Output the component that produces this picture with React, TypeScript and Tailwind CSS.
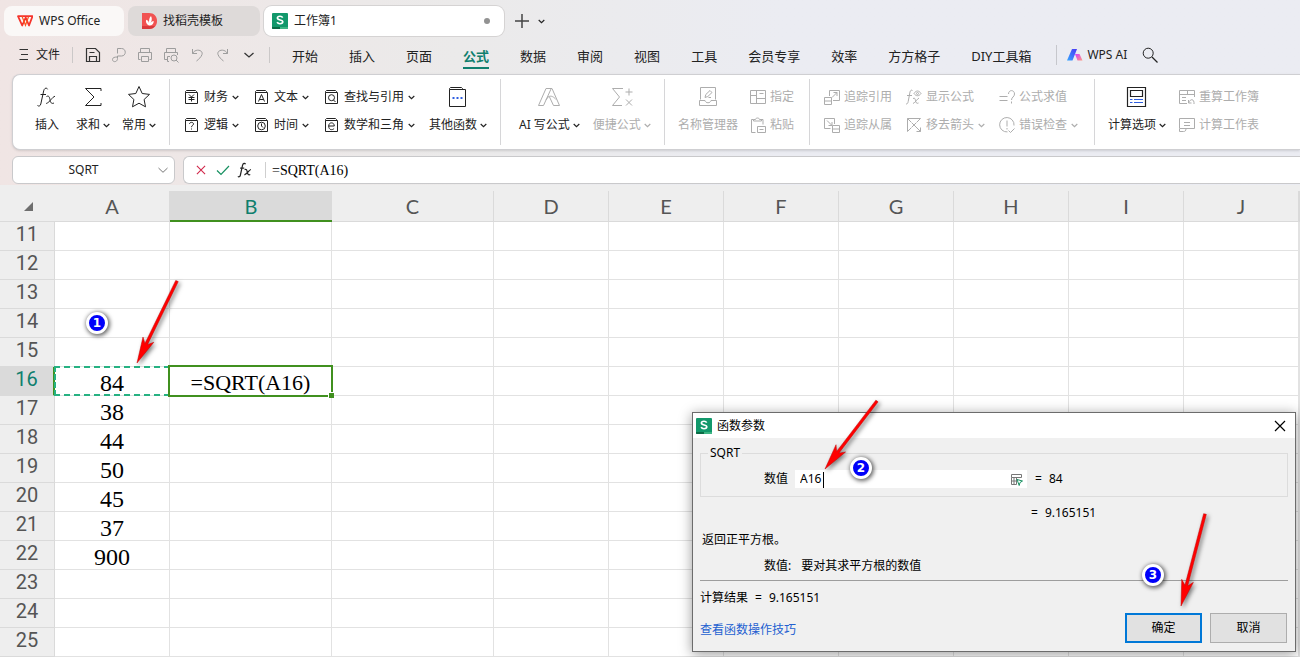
import React from "react";

type Kids = { children?: React.ReactNode };

function Icon({ size = 16, box = 16, className = "", children }: Kids & { size?: number; box?: number; className?: string }) {
  return (
    <svg width={size} height={size} viewBox={`0 0 ${box} ${box}`} fill="none" stroke="currentColor" className={`shrink-0 ${className}`} aria-hidden="true">
      {children}
    </svg>
  );
}

function Chevron() {
  return (
    <svg width="7" height="5" viewBox="0 0 7 5" fill="none" stroke="currentColor" strokeWidth="1.2" className="shrink-0" aria-hidden="true">
      <path d="M.7 1l2.8 2.6L6.3 1" />
    </svg>
  );
}

function SheetLogo() {
  return (
    <svg width="16" height="16" viewBox="0 0 16 16" className="shrink-0" aria-hidden="true">
      <rect width="16" height="16" rx="1" fill="#12986b" />
      <path d="M1 14h7v2H1a1 1 0 0 1-1-1v-1z" fill="#0a6b45" />
      <path d="M8 14h8v1a1 1 0 0 1-1 1H8z" fill="#3db583" />
      <path d="M10.7 4.6C10.2 3.7 9.2 3.3 8 3.3c-1.500 0-2.600.7-2.600 1.800 0 2.600 5.400 1.200 5.400 3.700 0 1.200-1.200 1.900-2.800 1.900-1.400 0-2.400-.5-2.900-1.500" fill="none" stroke="#fff" strokeWidth="1.600" />
    </svg>
  );
}

const fxPaths = (
  <>
    <path d="M12.600 4.300c-.6-1.700-3.200-1.700-3.900 1.500L5.800 19c-.5 2.200-2.200 2.500-3.300 1.500" />
    <path d="M5.500 9.500H11" />
    <path d="M11.500 11.500c2.200-1.200 3 .4 3.500 3.200.5 2.900 1.500 4.500 4 3.300M20 11.300c-2.500.2-5 6-8.800 7.200" />
  </>
);

const book = <path d="M1.500 3.500h12v11h-12zM1.500 3.500v-1l1-1h9l1 1v1" />;

function BookIcon({ children }: Kids) {
  return (
    <Icon>
      {book}
      {children}
    </Icon>
  );
}

function Small({ icon, label, menu, off }: { icon: React.ReactNode; label: string; menu?: boolean; off?: boolean }) {
  return (
    <button type="button" disabled={off} className={`flex h-5 items-center gap-1 whitespace-nowrap ${off ? "text-[#adadad]" : "text-[#222]"}`}>
      {icon}
      <span>{label}</span>
      {menu && <Chevron />}
    </button>
  );
}

function Big({ icon, label, menu, off }: { icon: React.ReactNode; label: string; menu?: boolean; off?: boolean }) {
  return (
    <button type="button" disabled={off} className={`flex flex-col items-center gap-1.5 whitespace-nowrap ${off ? "text-[#adadad]" : "text-[#222]"}`}>
      <span className="flex h-6 items-center">{icon}</span>
      <span className="flex h-5 items-center gap-[3px]">
        {label}
        {menu && <Chevron />}
      </span>
    </button>
  );
}

function Stack({ children }: Kids) {
  return <div className="flex flex-col gap-2 pt-0.5">{children}</div>;
}

function Rule() {
  return <div className="-mt-1.5 h-[66px] w-px shrink-0 bg-[#d6d6d8]" />;
}

function Ribbon() {
  return (
    <section className="ml-3 flex h-[76px] items-start overflow-hidden rounded-l-lg border border-r-0 border-[#cfcfd2] bg-white pt-2.5 text-[12px] leading-5 shadow-sm">
      <div className="flex w-[156px] shrink-0 gap-[18px] pl-[22px]">
        <Big label="插入" icon={<Icon size={24} box={24}>{fxPaths}</Icon>} />
        <div className="-ml-px flex gap-3">
          <Big label="求和" menu icon={<Icon size={24} box={24}><path d="M20 6V3.500H4.500L13 12l-8.500 8.500H20V18" /></Icon>} />
          <Big label="常用" menu icon={<Icon size={24} box={24}><path d="M12 1.500l3.200 7 7.300.9-5.400 5.100 1.400 7.300L12 18.200l-6.500 3.600 1.400-7.300L1.500 9.400l7.300-.9z" strokeLinejoin="round" /></Icon>} />
        </div>
      </div>
      <Rule />
      <div className="flex w-[330px] shrink-0 gap-[15px] pl-3.5">
        <Stack>
          <Small label="财务" menu icon={<BookIcon><path d="M5 5.500l2.500 2.500L10 5.500M7.500 8v4.500M4.500 8.500h6M4.500 10.500h6" /></BookIcon>} />
          <Small label="逻辑" menu icon={<BookIcon><path d="M5.500 7c0-2.200 4-2.200 4 0 0 1.300-2 1.300-2 3.200M7.500 11.500v1" /></BookIcon>} />
        </Stack>
        <Stack>
          <Small label="文本" menu icon={<BookIcon><path d="M4.500 12.500l3-7 3 7M5.500 10.500h4" /></BookIcon>} />
          <Small label="时间" menu icon={<BookIcon><circle cx="7.500" cy="9" r="3.800" /><path d="M7.500 6.500V9l1.500 1.500" /></BookIcon>} />
        </Stack>
        <Stack>
          <Small label="查找与引用" menu icon={<BookIcon><circle cx="7.500" cy="8.700" r="3" /><path d="M9.500 11l2 2" /></BookIcon>} />
          <Small label="数学和三角" menu icon={<BookIcon><path d="M4.700 9h5.600c0-4.200-5.600-4.200-5.600 0s3.600 4.400 5.400 2.500" /></BookIcon>} />
        </Stack>
        <div className="-ml-px">
          <Big
            label="其他函数"
            menu
            icon={
              <Icon size={24} box={24}>
                <path d="M3.500 4.500h16v17h-16zM3.500 4.500v-1l1-1h11l1 1v1" />
                <path d="M6.500 13h2M10.500 13h2M14.500 13h2" stroke="#2f5fe0" strokeWidth="2" />
              </Icon>
            }
          />
        </div>
      </div>
      <Rule />
      <div className="flex w-[163px] shrink-0 gap-[13px] pl-[18px]">
        <Big label="AI 写公式" menu icon={<Icon size={24} box={24} className="text-[#adadad]"><path d="M1.500 20.500L9 3.500h6l7.500 17h-6L12.500 12M6.500 20.500L14 4M1.500 20.500h5M11 12c3-2 6 0 8 2.500M11 12l-2 3" /></Icon>} />
        <Big label="便捷公式" menu off icon={<Icon size={24} box={24}><path d="M13 3.500H2.500l7 8.500-7 8.500H12M15.500 7h7M19 3.500v7M16 14.500l6 6M22 14.500l-6 6" /></Icon>} />
      </div>
      <Rule />
      <div className="flex w-36 shrink-0 gap-3 pl-[13px]">
        <Big label="名称管理器" off icon={<Icon size={24} box={24}><path d="M4.500 14.500v-12h15v12M3.500 15.500h5.500c.5 3 5.500 3 6 0h5.500v5h-17zM9 12.500l.8-3L14 5.500l2 2-4.200 4zM12.500 12.500H15" /></Icon>} />
        <Stack>
          <Small label="指定" off icon={<Icon><path d="M.5 1.500h15v13H.5zM6.500 1.500v13M.5 6.500h6M6.500 9.500h9M9.500 4.500h4" /></Icon>} />
          <Small label="粘贴" off icon={<Icon><path d="M3.500 2.500h-2v13h4M11 2.500h2v5M3.500 4V2.500h2c0-2 4-2 4 0h2V4zM7.500 9.500h8v6h-8zM9.500 12.500h4" /></Icon>} />
        </Stack>
      </div>
      <Rule />
      <div className="flex w-[284px] shrink-0 gap-3.5 pl-3.5">
        <Stack>
          <Small label="追踪引用" off icon={<Icon><path d="M5.500 7V1.500h10v10H9M.5 8.500h7v7h-7zM.5 12h7M8 8.500l5-5M9.500 3.500H13V7" /></Icon>} />
          <Small label="追踪从属" off icon={<Icon><path d="M6.500 11.500h-6V1.500h10V7M8.500 8.500h7v7h-7zM8.500 12h7M3 3.500l5 5M8 5v3.500H4.500" /></Icon>} />
        </Stack>
        <Stack>
          <Small label="显示公式" off icon={<Icon><path d="M6.500 1.500C5.500.5 4.300 1.500 4 3L2.200 12.500c-.3 1.800-1 2.500-2.200 2.500M1 6.500h5M7 9.500c2-1 2.200.5 2.500 2.200s1 3.300 3 2.300M13 9c-2 1-3.500 4.500-6 5.500M8 4.500c2-3.300 5-3.300 7 0-2 3-5 3-7 0z" /><circle cx="11.500" cy="4.500" r="1" /></Icon>} />
          <Small label="移去箭头" menu off icon={<Icon><path d="M1.500 14.500v-13h13M1.500 1.500l4 4M9.500 9.500l5 5M14.500 10.500v4h-4M1.500 14.500l4-4M14.500 1.500l-4 4M6 6l4 4M10 6l-4 4" /></Icon>} />
        </Stack>
        <Stack>
          <Small label="公式求值" off icon={<Icon><path d="M.5 7.500h8M.5 11.500h8M9.500 5c0-4.500 6-4.500 6 0 0 3-3 3-3 6M12.500 12.500v2" /></Icon>} />
          <Small label="错误检查" menu off icon={<Icon><path d="M8.500 14.900A7.200 7.200 0 1 1 15 8.500M8 3.500v6M8 11v1.500M9.500 13.500l2 2 4-4" /></Icon>} />
        </Stack>
      </div>
      <Rule />
      <div className="flex shrink-0 gap-[13px] pl-[13px]">
        <Big label="计算选项" menu icon={<Icon size={24} box={24}><path d="M2.500 2.500h18v19h-18zM5.500 5.500h12v6h-12z" strokeWidth="1.200" /><path d="M5 14.500h2.500M9 14.500h9M5 17.500h2.500M9 17.500h9" stroke="#2f5fe0" /></Icon>} />
        <Stack>
          <Small label="重算工作簿" off icon={<Icon><path d="M8 14.500H.5v-13h15V8M.5 5.500h15M8.500 1.500v4M3 8.500h4M3 11.500h4M9.500 11l0 3h3M9.500 14c2-5 6-4 5.500 1" /></Icon>} />
          <Small label="计算工作表" off icon={<Icon><path d="M.5 11V1.500h15v10H7M5 5.500h6M5 8.500h6M.5 11.500H7c0 2.500-1 3-2.500 3h-4z" /></Icon>} />
        </Stack>
      </div>
    </section>
  );
}

function TitleBar() {
  return (
    <div className="flex gap-1 pt-1.5 pl-1 text-[12px] text-[#222]">
      <button type="button" className="flex h-[30px] w-30 items-center gap-1.5 rounded-lg bg-[#faf8f7] pl-[13px]">
        <svg width="16" height="12" viewBox="0 0 16 12" fill="none" aria-hidden="true">
          <path d="M1 1.200h14.500L12 10.500 8.700 2.500 5.200 10.500z" stroke="#f5342c" strokeWidth="1.800" strokeLinejoin="round" />
          <path d="M5 1.200l3.500 9 3-8.500" stroke="#fa5a1f" strokeWidth="1.200" />
        </svg>
        WPS Office
      </button>
      <button type="button" className="flex h-[30px] w-33 items-center gap-1.5 rounded-lg bg-[#dedad9] pl-3.5">
        <svg width="15" height="16" viewBox="0 0 15 16" aria-hidden="true">
          <path d="M0 0h7c5 0 8 3.500 8 8s-3 8-8 8H0z" fill="#f15352" />
          <path d="M0 13h13c-1.500 2-3.500 3-6 3H0z" fill="#d93a3c" />
          <path d="M7 12.500C4.500 11.500 3.300 9 4.200 6.800c1.600.5 2.700 1.800 2.800 3.400C7 7.500 7 5 9 3c1.500 2.600.8 5.600-.8 7.300C9 9 10 8.300 11.700 8c.2 2.600-1.700 4.700-4.700 4.500z" fill="#fff" />
        </svg>
        找稻壳模板
      </button>
      <button type="button" className="flex h-[30px] w-60 items-center gap-1.5 rounded-lg bg-white pl-2 shadow-[0_0_0_1px_#d5d3d3]">
        <SheetLogo />
        工作簿1
        <span className="mr-3.5 ml-auto size-1.5 rounded-full bg-[#929292]" />
      </button>
      <button type="button" aria-label="新建标签" className="ml-1.5 flex items-center">
        <Icon><path d="M8 1v14M1 8h14" stroke="#444" strokeWidth="1.500" /></Icon>
      </button>
      <button type="button" aria-label="标签列表" className="ml-1 flex items-center">
        <Chevron />
      </button>
    </div>
  );
}

const tabs = ["开始", "插入", "页面", "公式", "数据", "审阅", "视图", "工具", "会员专享", "效率", "方方格子", "DIY工具箱"];

const quick: [string, React.ReactNode, string][] = [
  ["保存", <path d="M1.500 1.500h9l4 4v9h-13zM4.500 14.500v-5h7v5M4.500 5.500h5" strokeWidth="1.200" />, "text-[#333]"],
  ["输出为PDF", <path d="M6.500 6.500v-5h4c5 0 5 7.500 0 7.500h-4v2.500c0 4-5 4-5 1 0-2 2-2.500 5-2.500" />, "text-[#9d9d9d]"],
  ["打印", <path d="M3.500 5V1.500h9V5M3.500 12.500h-2v-7h13v7h-2M4.500 9.500h7v5h-7z" />, "text-[#9d9d9d]"],
  ["打印预览", <><path d="M3.500 5V1.500h9V5M4 12.500H1.500v-7h13V8M6 14.500H4.500v-5H7" /><circle cx="11" cy="11" r="3" /><path d="M13 13l2.500 2.500" /></>, "text-[#9d9d9d]"],
  ["撤销", <path d="M3.500 2v4.500H8M3.500 6.500c3-5.500 11-3.500 9.500 1-.8 2.500-3 4.500-5.500 6.500" />, "text-[#9d9d9d]"],
  ["恢复", <path d="M12.500 2v4.500H8M12.500 6.500C9.500 1 1.500 3 3 7.500c.8 2.500 3 4.500 5.500 6.500" />, "text-[#9d9d9d]"],
  ["更多", <path d="M3.500 6l4.500 4 4.500-4" strokeWidth="1.300" />, "text-[#333]"],
];

function MenuBar() {
  return (
    <nav className="flex h-[38px] items-center whitespace-nowrap text-[#222]">
      <button type="button" className="ml-[18px] flex items-center gap-1.5 text-[12px]">
        <svg width="12" height="12" viewBox="0 0 12 12" stroke="#333" aria-hidden="true"><path d="M1.500 .5H10M3 5.500h7M1.500 10.500H10" /></svg>
        文件
      </button>
      <div className="mr-3 ml-3 h-4 w-px bg-[#cbc8c8]" />
      <div className="flex gap-2.5">
        {quick.map(([name, shape, tone]) => (
          <button key={name} type="button" aria-label={name} className={tone}>
            <Icon>{shape}</Icon>
          </button>
        ))}
      </div>
      <div className="ml-3 h-4 w-px bg-[#cbc8c8]" />
      <div className="ml-[22px] flex gap-[31px] text-[13px]">
        {tabs.map((t) => (
          <button key={t} type="button" className={`border-b-2 pt-1 leading-[22px] ${t === "公式" ? "border-[#0f7f6e] font-bold text-[#0f7f6e]" : "border-transparent"}`}>
            {t}
          </button>
        ))}
      </div>
      <div className="ml-[25px] h-5 w-px bg-[#c6c7cc]" />
      <button type="button" className="ml-2.5 flex items-center gap-1 text-[12px]">
        <svg width="16" height="12" viewBox="0 0 16 12" aria-hidden="true">
          <defs>
            <linearGradient id="ai-blue" x1="0" y1="1" x2="1" y2="0"><stop offset="0" stopColor="#35a8ff" /><stop offset="1" stopColor="#4a35f5" /></linearGradient>
            <linearGradient id="ai-pink" x1="0" y1="0" x2="1" y2="1"><stop offset="0" stopColor="#d43cff" /><stop offset="1" stopColor="#ff9a80" /></linearGradient>
          </defs>
          <path d="M5 0h5L5.500 11.500H0z" fill="url(#ai-blue)" />
          <path d="M8 5h4.500l3 6.500h-5z" fill="url(#ai-pink)" />
        </svg>
        WPS AI
      </button>
      <button type="button" aria-label="搜索" className="ml-[15px]">
        <Icon><circle cx="6.200" cy="6.200" r="5" /><path d="M10 10l5.500 5.500" strokeWidth="1.200" /></Icon>
      </button>
    </nav>
  );
}

function FormulaBar() {
  return (
    <div className="mt-1.5 ml-3 flex h-7 gap-2 text-[#222]">
      <div className="flex w-[163px] shrink-0 items-center rounded-md border border-[#c9c9cb] bg-white pr-1.5">
        <input aria-label="名称框" defaultValue="SQRT" className="w-full min-w-0 bg-transparent pr-1 text-center text-[12px] outline-none" />
        <Icon size={10} box={10} className="text-[#777]"><path d="M.5 3L5 7.300 9.500 3" /></Icon>
      </div>
      <div className="flex min-w-0 flex-1 items-center rounded-l-md border border-r-0 border-[#c9c9cb] bg-white">
        <button type="button" aria-label="取消输入" className="ml-3"><Icon size={10} box={11} className="text-[#d1274b]"><path d="M1 1l9 9M10 1l-9 9" strokeWidth="1.200" /></Icon></button>
        <button type="button" aria-label="确认输入" className="ml-2.5"><Icon size={14} box={14} className="text-[#169060]"><path d="M1 7.500l4 4L13 3" strokeWidth="1.200" /></Icon></button>
        <button type="button" aria-label="插入函数" className="ml-1.5"><Icon size={18} box={24}><g strokeWidth="1.600">{fxPaths}</g></Icon></button>
        <div className="ml-[11px] h-4 w-px bg-[#cfcfcf]" />
        <input aria-label="编辑栏" defaultValue="=SQRT(A16)" className="ml-1.5 min-w-0 flex-1 bg-transparent font-['Liberation_Serif',serif] text-[14px] text-black outline-none" />
      </div>
    </div>
  );
}

const columns = ["A", "B", "C", "D", "E", "F", "G", "H", "I", "J", ""];
const rows = [11, 12, 13, 14, 15, 16, 17, 18, 19, 20, 21, 22, 23, 24, 25];
const values: Record<string, string> = { A16: "84", B16: "=SQRT(A16)", A17: "38", A18: "44", A19: "50", A20: "45", A21: "37", A22: "900" };

function Grid() {
  return (
    <table className="mt-1.5 w-full table-fixed border-separate border-spacing-0 bg-white text-center">
      <colgroup>
        <col className="w-[55px]" />
        <col className="w-[115px]" />
        <col className="w-[162px]" />
        <col className="w-[162px]" />
        {columns.slice(3, 10).map((c) => (
          <col key={c} className="w-[115px]" />
        ))}
        <col />
      </colgroup>
      <thead>
        <tr className="h-[31px] font-['Lato',sans-serif] text-[20px] leading-7 text-[#555]">
          <th className="border-b border-[#dadada] bg-[#eee] p-0">
            <svg width="9" height="9" viewBox="0 0 9 9" className="ml-6" aria-hidden="true"><path d="M9 0v9H0z" fill="#6e6e6e" /></svg>
          </th>
          {columns.map((c) => (
            <th key={c} className={`p-0 font-normal ${c === "B" ? "border-b-2 border-[#40901f] bg-[#dadada] text-[#0f7f6e]" : "border-r border-b border-[#dadada] bg-[#eee]"}`}>
              {c}
            </th>
          ))}
        </tr>
      </thead>
      <tbody>
        {rows.map((r) => (
          <tr key={r} className="h-[29px]">
            <th className={`border-b border-[#dadada] p-0 pb-1 font-['Roboto',sans-serif] text-[20px] leading-6 font-normal ${r === 16 ? "border-r-2 border-r-[#40901f] bg-[#dadada] text-[#0f7f6e]" : "border-r bg-[#eee] text-[#555]"}`}>{r}</th>
            {columns.map((c) => {
              const id = c + r;
              return (
                <td key={c} className={`relative border-r border-b border-[#e2e2e2] p-0 pt-1 font-['Liberation_Serif',serif] leading-6 text-black ${c === "B" ? "text-[22px]" : "text-[24px]"}`}>
                  {values[id]}
                  {id === "A16" && <span className="absolute -inset-px z-10 border-2 border-dashed border-[#26b182]" />}
                  {id === "B16" && (
                    <span className="absolute -inset-0.5 z-20 border-2 border-[#40901f]">
                      <span className="absolute -right-[3px] -bottom-[3px] size-1.5 border-t border-l border-white bg-[#40901f]" />
                    </span>
                  )}
                </td>
              );
            })}
          </tr>
        ))}
      </tbody>
    </table>
  );
}

function FunctionDialog() {
  return (
    <div role="dialog" aria-label="函数参数" className="absolute top-[412px] left-[692px] z-30 flex h-60 w-[604px] flex-col border border-[#6c6c6c] bg-[#f0f0f0] text-[12px] leading-[18px] text-black shadow-[0_2px_12px_rgba(0,0,0,0.4)]">
      <div className="flex h-[25px] items-center gap-[5px] bg-white pr-[9px] pl-[3px]">
        <SheetLogo />
        函数参数
        <button type="button" aria-label="关闭" className="ml-auto"><Icon size={12} box={12}><path d="M1 1l10 10M11 1L1 11" strokeWidth="1.200" /></Icon></button>
      </div>
      <div className="flex flex-1 flex-col px-[7px] pt-1.5">
        <fieldset className="h-[53px] border border-[#dcdcdc]">
          <legend className="ml-[7px] px-0.5 leading-[18px]">SQRT</legend>
          <div className="flex items-center pt-2 pl-[63px]">
            <label htmlFor="number-arg" className="pr-[7px]">数值</label>
            <div className="relative flex h-[18px] w-[232px] items-center bg-white pr-1 pl-[5px]">
              <input id="number-arg" defaultValue="A16" className="w-full min-w-0 bg-transparent outline-none" />
              <span className="absolute top-0.5 left-7 h-4 w-px bg-black" />
              <button type="button" aria-label="选择区域">
                <svg width="13" height="13" viewBox="0 0 13 13" fill="none" aria-hidden="true">
                  <path d="M1.500 1.500h10v3h-10zM1.500 4.500v7h5v-7M1.500 8h5M4 4.500v7" stroke="#777" />
                  <path d="M7 6.500l5.500 1.500-2.500 1.500-.8 3z" fill="#fff" stroke="#169060" />
                </svg>
              </button>
            </div>
            <span className="ml-2">=</span>
            <output className="ml-[7px]">84</output>
          </div>
        </fieldset>
        <div className="mt-[7px] flex gap-[7px] pl-[331px]"><span>=</span><output>9.165151</output></div>
        <p className="mt-[9px] pl-0.5">返回正平方根。</p>
        <p className="mt-2 flex gap-2.5 pl-16"><span>数值:</span><span>要对其求平方根的数值</span></p>
        <hr className="mt-[5px] border-t border-[#9d9d9d]" />
        <div className="mt-2 flex gap-[7px]"><span>计算结果</span><span>=</span><output>9.165151</output></div>
        <div className="mt-1.5 flex items-center gap-2">
          <a href="#tips" className="mt-1 mr-auto text-[#2360d0]">查看函数操作技巧</a>
          <button type="button" className="h-[30px] w-[77px] border-2 border-[#0078d7] bg-[#e1e1e1]">确定</button>
          <button type="button" className="mr-px h-[30px] w-[77px] border border-[#adadad] bg-[#e1e1e1]">取消</button>
        </div>
      </div>
    </div>
  );
}

/* An arrow whose tip is dx to the left of its tail and dy below it. */
function Arrow({ place, dx, dy }: { place: string; dx: number; dy: number }) {
  const len = Math.hypot(dx, dy);
  const ux = dx / len;
  const uy = -dy / len;
  const at = (along: number, side: number) => `${10 + ux * along - uy * side},${10 + dy + uy * along + ux * side}`;
  return (
    <svg width={dx + 24} height={dy + 24} viewBox={`0 0 ${dx + 24} ${dy + 24}`} className={`pointer-events-none absolute z-40 drop-shadow-[2px_2px_2px_rgba(0,0,0,0.5)] ${place}`} aria-hidden="true">
      <polygon points={[at(0, 0), at(26, 6), at(21, 1.4), at(len, 1.4), at(len, -1.4), at(21, -1.4), at(26, -6)].join(" ")} fill="#f00" stroke="#c00000" strokeWidth=".5" strokeLinejoin="round" />
    </svg>
  );
}

function Badge({ n, place }: { n: number; place: string }) {
  return (
    <span className={`absolute z-40 flex size-[22px] items-center justify-center rounded-full border-[3px] border-white bg-[#0000fa] font-['DejaVu_Sans',sans-serif] text-[12px] leading-none font-bold text-white shadow-[1px_1px_4px_1px_rgba(0,0,0,0.6)] ${place}`}>
      {n}
    </span>
  );
}

export default function App() {
  return (
    <main className="relative overflow-hidden bg-[#eee] font-['Noto_Sans','Noto_Sans_CJK_SC',sans-serif]">
      <header className="bg-linear-to-r from-[#f0e5e4] via-[#ebeaea] via-35% to-[#ebecf2] to-60% pb-px">
        <TitleBar />
        <MenuBar />
        <Ribbon />
        <FormulaBar />
      </header>
      <Grid />
      <FunctionDialog />
      <Badge n={1} place="left-[86px] top-[312px]" />
      <Badge n={2} place="left-[850px] top-[457px]" />
      <Badge n={3} place="left-[1142px] top-[564px]" />
      <Arrow place="left-[127px] top-[271px]" dx={40} dy={82} />
      <Arrow place="left-[815px] top-[391px]" dx={52} dy={68} />
      <Arrow place="left-[1171px] top-[504px]" dx={24} dy={92} />
    </main>
  );
}
